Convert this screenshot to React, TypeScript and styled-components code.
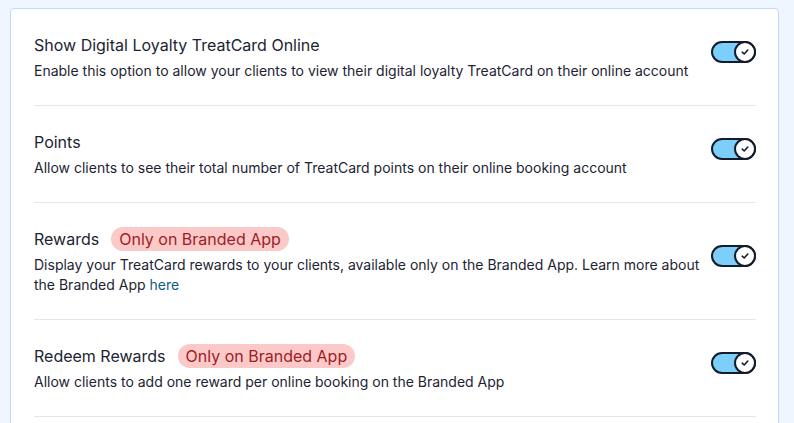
import React from "react";
import styled, { createGlobalStyle } from "styled-components";

const Global = createGlobalStyle`
  html, body { margin: 0; padding: 0; background: #eff6ff; }
  body { font-family: Inter, "Noto Sans", sans-serif; color: #1c2433; -webkit-font-smoothing: antialiased; }
`;

const Page = styled.div`
  padding: 8px 0 0 10px;
  height: 415px;
  overflow: hidden;
`;

const Card = styled.div`
  background: #ffffff;
  border: 1px solid #bfdbfe;
  border-radius: 4px;
  padding: 0 22px 60px 23px;
  box-sizing: content-box;
  width: 722px;
`;

const Row = styled.div`
  display: flex;
  align-items: center;
  gap: 8px;
  padding: 24px 0;
  border-bottom: 1px solid #e5e7eb;
`;

const Texts = styled.div`
  flex: 1;
  display: flex;
  flex-direction: column;
  gap: 4px;
`;

const TitleLine = styled.div`
  display: flex;
  align-items: center;
  gap: 12px;
  min-height: 24px;
`;

const Title = styled.span`
  font-size: 16px;
  line-height: 24px;
  color: #1c2433;
`;

const Badge = styled.span`
  display: inline-flex;
  align-items: center;
  height: 24px;
  padding: 0 8px;
  border-radius: 12px;
  background: #fcc9c9;
  color: #9f1c24;
  font-size: 16px;
  line-height: 24px;
`;

const Desc = styled.p`
  margin: 0;
  font-size: 14px;
  line-height: 20px;
  color: #1c2433;
`;

const Link = styled.a`
  color: #0f5a86;
  text-decoration: none;
`;

const Toggle = styled.div`
  position: relative;
  flex: none;
  width: 41px;
  height: 18px;
  border: 2px solid #141c2b;
  border-radius: 12px;
  background: #7ccffb;
  margin-bottom: 10px;
`;

const Knob = styled.div`
  position: absolute;
  right: -2px;
  top: -2px;
  width: 18px;
  height: 18px;
  border: 2px solid #141c2b;
  border-radius: 50%;
  background: #ffffff;
  display: flex;
  align-items: center;
  justify-content: center;
`;

const Switch = () => (
  <Toggle>
    <Knob>
      <svg width="10" height="10" viewBox="0 0 10 10">
        <path d="M2.2 5.2 L4.2 7 L7.8 3" fill="none" stroke="#141c2b" strokeWidth="1.6" strokeLinecap="round" strokeLinejoin="round" />
      </svg>
    </Knob>
  </Toggle>
);

type Item = { title: string; badge?: boolean; desc: React.ReactNode };

const items: Item[] = [
  {
    title: "Show Digital Loyalty TreatCard Online",
    desc: "Enable this option to allow your clients to view their digital loyalty TreatCard on their online account",
  },
  {
    title: "Points",
    desc: "Allow clients to see their total number of TreatCard points on their online booking account",
  },
  {
    title: "Rewards",
    badge: true,
    desc: (
      <>
        Display your TreatCard rewards to your clients, available only on the Branded App. Learn more about the
        Branded App <Link href="#">here</Link>
      </>
    ),
  },
  {
    title: "Redeem Rewards",
    badge: true,
    desc: "Allow clients to add one reward per online booking on the Branded App",
  },
];

export default function App() {
  return (
    <>
      <Global />
      <Page>
        <Card>
          {items.map((it) => (
            <Row key={it.title}>
              <Texts>
                <TitleLine>
                  <Title>{it.title}</Title>
                  {it.badge && <Badge>Only on Branded App</Badge>}
                </TitleLine>
                <Desc>{it.desc}</Desc>
              </Texts>
              <Switch />
            </Row>
          ))}
        </Card>
      </Page>
    </>
  );
}
